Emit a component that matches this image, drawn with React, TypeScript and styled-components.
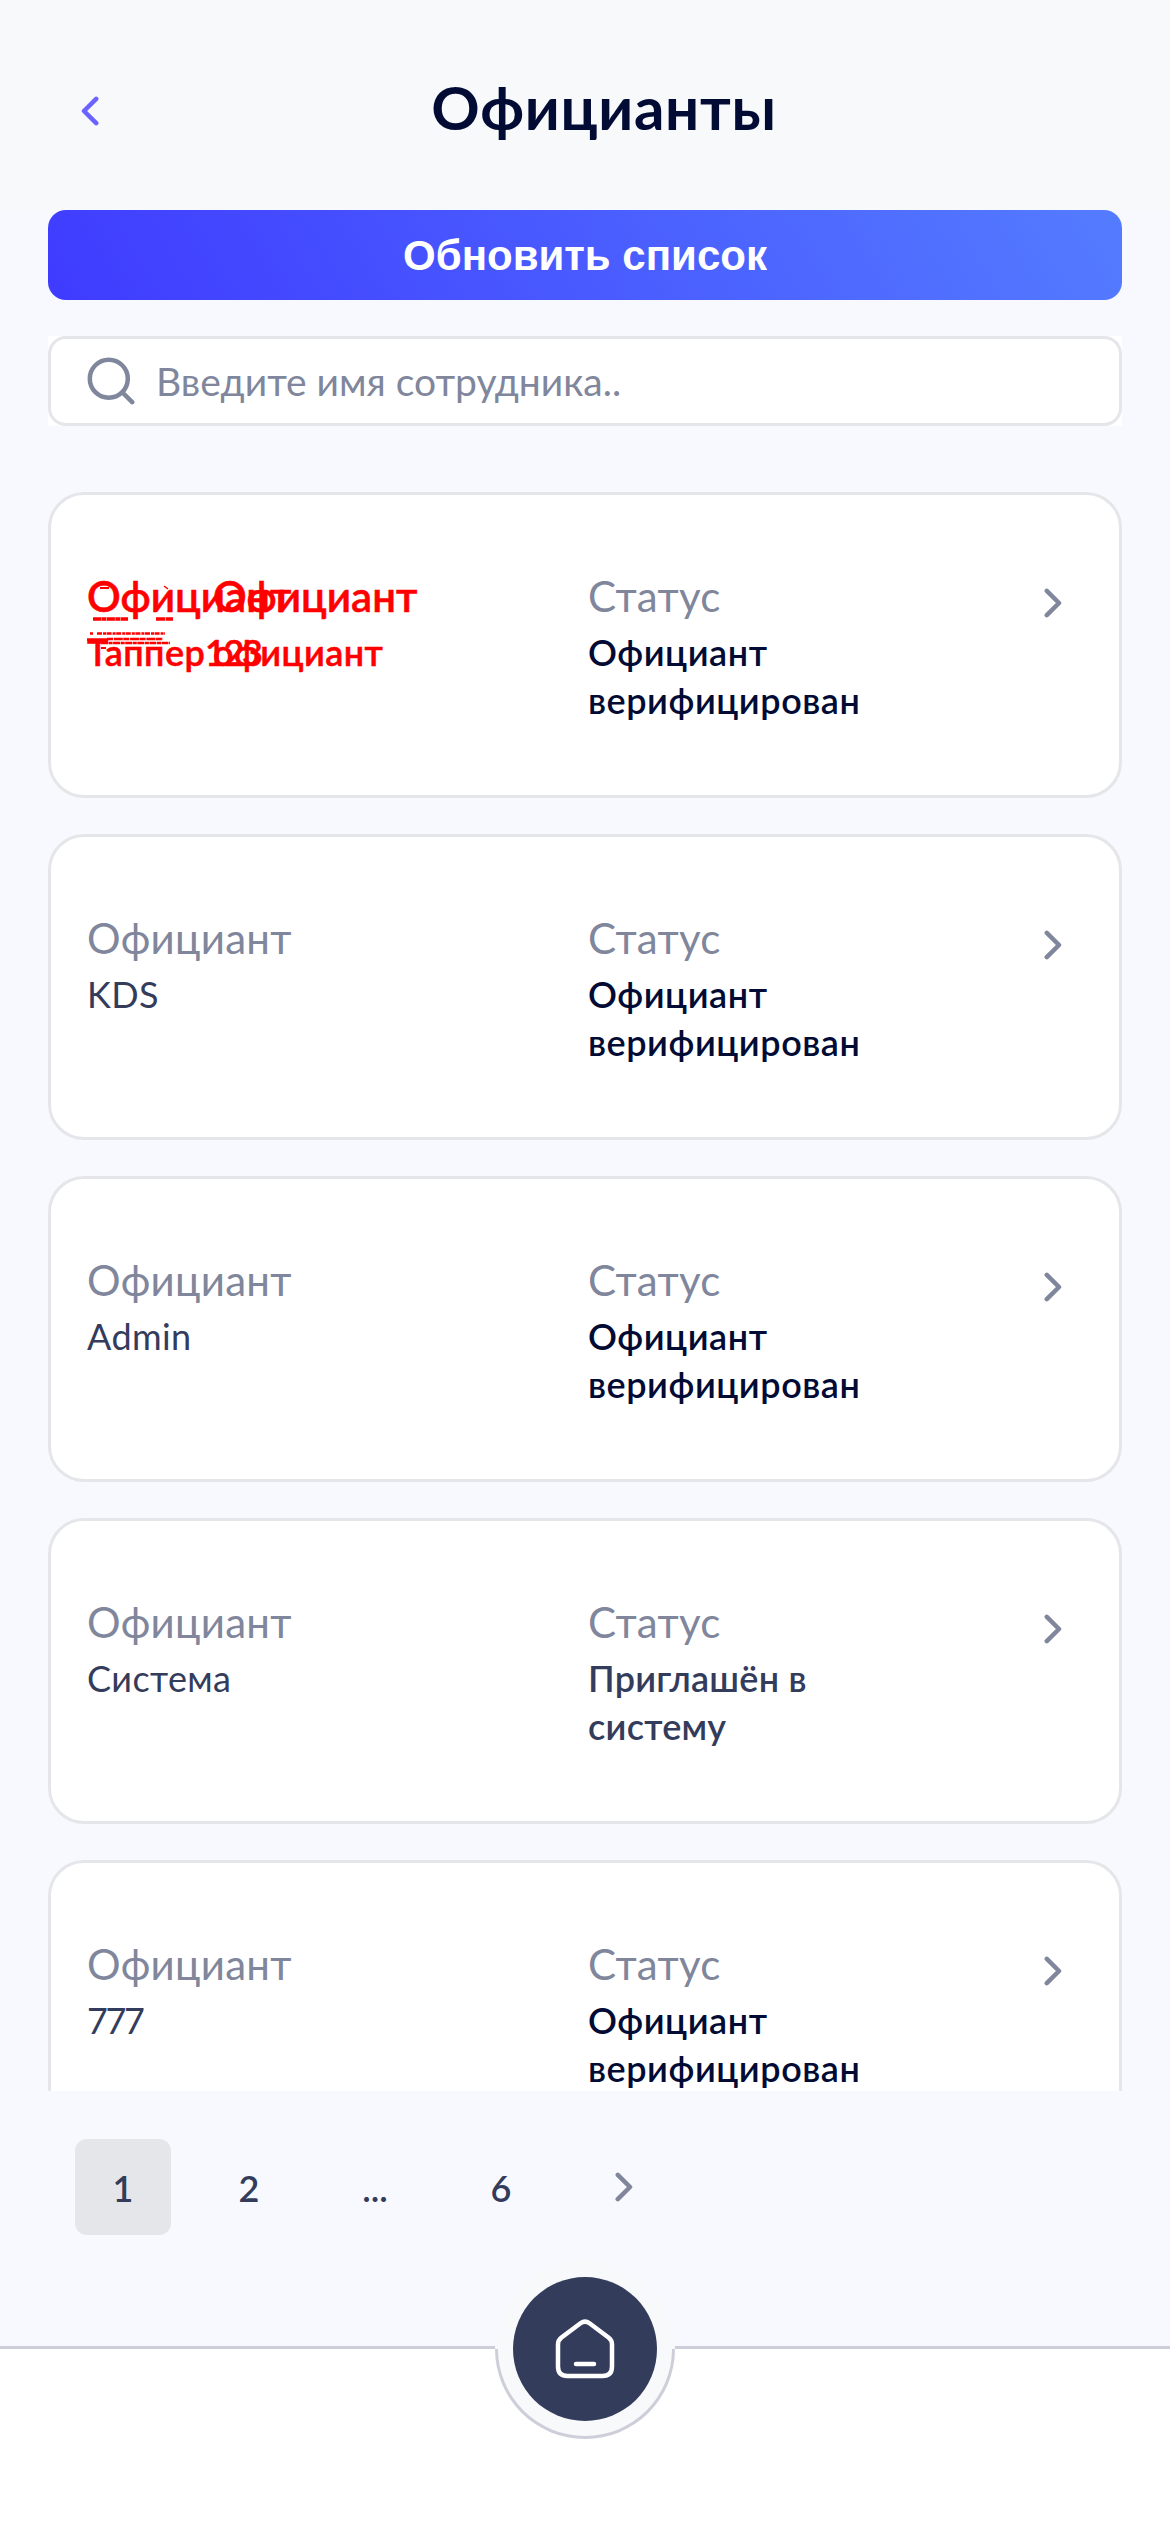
import React from "react";
import styled, { createGlobalStyle } from "styled-components";

const Global = createGlobalStyle`
  *, *::before, *::after { box-sizing: border-box; }
  body { margin: 0; background: #f8f9fe; font-family: Lato, "Noto Sans", sans-serif; }
`;

const Screen = styled.div`
  width: 1170px;
  height: 2532px;
  display: flex;
  flex-direction: column;
  overflow: hidden;
  background: #f8f9fe;
`;

const Header = styled.header`
  height: 210px;
  flex: none;
  display: grid;
  grid-template-columns: 180px 1fr 144px;
  align-items: center;
  padding-top: 3px;
  background: #f7f9fb;
`;

const BackButton = styled.button`
  border: 0;
  background: none;
  padding: 9px 0 0 81px;
  height: 42px;
  display: flex;
  align-items: center;
`;

const Title = styled.h1`
  margin: 0;
  padding-left: 2px;
  text-align: center;
  font: 700 60px/72px Lato, "Noto Sans", sans-serif;
  letter-spacing: 0.7px;
  color: #020b34;
`;

const Main = styled.main`
  height: 1881px;
  flex: none;
  padding: 0 48px;
  display: flex;
  flex-direction: column;
`;

const RefreshButton = styled.button`
  flex: none;
  height: 90px;
  border: 0;
  border-radius: 18px;
  padding: 2px 0 0;
  background: linear-gradient(60deg, #3f3bff 0%, #547cff 100%);
  color: #fff;
  font: bold 42px/48px "Liberation Sans", Arial, sans-serif;
`;

const Search = styled.div`
  flex: none;
  margin-top: 36px;
  height: 90px;
  background: #fff;
`;

const SearchBox = styled.label`
  height: 90px;
  border: 3px solid #e5e6ea;
  border-radius: 18px;
  display: flex;
  align-items: center;
  gap: 21px;
  padding-left: 36px;
  font: 400 39px/48px Lato, "Noto Sans", sans-serif;
  color: #80869b;
`;

const List = styled.section`
  margin-top: 66px;
  flex: 1;
  min-height: 0;
  overflow: hidden;
  display: flex;
  flex-direction: column;
  gap: 36px;
`;

const Card = styled.article`
  flex: none;
  height: 306px;
  border: 3px solid #e5e6ea;
  border-radius: 36px;
  background: #fff;
  padding: 76px 36px 0;
  display: grid;
  grid-template-columns: 501px 1fr 72px;
`;

const Field = styled.div`
  position: relative;
`;

const Label = styled.div<{ $alert?: boolean }>`
  font: ${(p) => (p.$alert ? 600 : 400)} 42px/51px Lato, "Noto Sans", sans-serif;
  letter-spacing: ${(p) => (p.$alert ? 0 : 0.3)}px;
  color: ${(p) => (p.$alert ? "#ff0000" : "#80869b")};
  -webkit-text-stroke: ${(p) => (p.$alert ? "0.5px #ff0000" : "0")};
  white-space: nowrap;
`;

const Value = styled.div<{ $alert?: boolean }>`
  margin-top: 6px;
  font: ${(p) => (p.$alert ? 600 : 400)} 36px/48px Lato, "Noto Sans", sans-serif;
  letter-spacing: 0.4px;
  color: ${(p) => (p.$alert ? "#ff0000" : "#343c5c")};
  -webkit-text-stroke: ${(p) => (p.$alert ? "0.5px #ff0000" : "0")};
  white-space: nowrap;
`;

const Digits = styled.span`
  letter-spacing: -2.4px;
`;

const Status = styled.div<{ $pending?: boolean }>`
  margin-top: 6px;
  width: 290px;
  font: 600 36px/48px Lato, "Noto Sans", sans-serif;
  letter-spacing: ${(p) => (p.$pending ? 0.25 : 0.55)}px;
  color: ${(p) => (p.$pending ? "#343c5c" : "#020b34")};
`;

const Ghost = styled.div`
  position: absolute;
  left: 126px;
  top: 0;
`;

const Scribble = styled.svg`
  position: absolute;
  left: 0;
  top: 13px;
`;

const Open = styled.div`
  padding: 17px 0 0 33px;
`;

const Pagination = styled.nav`
  flex: none;
  margin-top: 48px;
  height: 96px;
  padding-left: 75px;
  display: flex;
  gap: 30px;
`;

const Page = styled.button<{ $active?: boolean }>`
  width: 96px;
  height: 96px;
  border: 0;
  border-radius: 12px;
  padding: 2px 0 0;
  display: flex;
  align-items: center;
  justify-content: center;
  background: ${(p) => (p.$active ? "#e5e6ea" : "transparent")};
  color: #343c5c;
  font: 600 36px/48px Lato, "Noto Sans", sans-serif;
`;

const NextPage = styled(Page)`
  padding: 0 6px 0 0;
`;

const BottomBar = styled.footer`
  margin-top: 111px;
  flex: 1;
  border-top: 3px solid #cdced9;
  background: #fff;
  display: flex;
  justify-content: center;
`;

const HomeRing = styled.div`
  flex: none;
  width: 180px;
  height: 180px;
  margin-top: -90px;
  border-radius: 50%;
  background: linear-gradient(#f7f9fb 50%, #cdced9 50%);
  display: flex;
  align-items: center;
  justify-content: center;
`;

const HomeGap = styled.div`
  width: 174px;
  height: 174px;
  border-radius: 50%;
  background: #f7f9fb;
  display: flex;
  align-items: center;
  justify-content: center;
`;

const HomeButton = styled.div`
  width: 144px;
  height: 144px;
  border-radius: 50%;
  background: #343c5c;
  display: flex;
  align-items: center;
  justify-content: center;
`;

const Chevron = () => (
  <svg width="18" height="30" viewBox="0 0 18 30" fill="none">
    <path d="M2.800 2.800L15 15L2.800 27.200" stroke="#80869b" strokeWidth="4.500" strokeLinecap="round" strokeLinejoin="round" />
  </svg>
);

/* Tiny illegible lines laid over the first card */
const FinePrint = () => (
  <Scribble width="90" height="70" viewBox="0 0 90 70" stroke="#ff0000" fill="none">
    <path d="M13 4H22" strokeWidth="2" />
    <path d="M77 2L81 5" strokeWidth="1.500" />
    <path d="M6 35H41" strokeWidth="3.500" strokeDasharray="8 .4 5 .5" />
    <path d="M69 35H86" strokeWidth="3.500" strokeDasharray="9 .6" />
    <path d="M3 49.500H6M10 49.500H78" strokeWidth="2.500" strokeDasharray="5 1 3 .6" />
    <path d="M0 55.500H20" strokeWidth="2.500" />
    <path d="M20 55H76" strokeWidth="2.500" strokeDasharray="6 .8 9 .5" />
    <path d="M14 59H83" strokeWidth="2.500" strokeDasharray="7 .6 4 .5" />
    <path d="M14 64H19" strokeWidth="2" />
  </Scribble>
);

type Waiter = { name: string; digits?: string; alert?: boolean; pending?: boolean };

const waiters: Waiter[] = [
  { name: "Таппер", digits: "123", alert: true },
  { name: "KDS" },
  { name: "Admin" },
  { name: "Система", pending: true },
  { name: "", digits: "777" },
];

export default function App() {
  return (
    <Screen>
      <Global />
      <Header>
        <BackButton>
          <svg width="18" height="30" viewBox="0 0 18 30" fill="none">
            <path d="M15.200 2.800L3 15l12.200 12.200" stroke="#6a63ff" strokeWidth="4.500" strokeLinecap="round" strokeLinejoin="round" />
          </svg>
        </BackButton>
        <Title>Официанты</Title>
      </Header>
      <Main>
        <RefreshButton>Обновить список</RefreshButton>
        <Search>
          <SearchBox>
            <svg width="48" height="48" viewBox="0 0 48 48" fill="none" stroke="#80869b" strokeWidth="4.500" strokeLinecap="round">
              <circle cx="21.800" cy="21.700" r="19" />
              <path d="M35.500 35.500L45.200 45.200" />
            </svg>
            Введите имя сотрудника..
          </SearchBox>
        </Search>
        <List>
          {waiters.map((w, i) => (
            <Card key={i}>
              <Field>
                <Label $alert={w.alert}>Официант</Label>
                <Value $alert={w.alert}>
                  {w.name}
                  {w.digits && <Digits>{w.digits}</Digits>}
                </Value>
                {w.alert && (
                  <Ghost>
                    <Label $alert>Официант</Label>
                    <Value $alert>официант</Value>
                  </Ghost>
                )}
                {w.alert && <FinePrint />}
              </Field>
              <Field>
                <Label>Статус</Label>
                <Status $pending={w.pending}>
                  {w.pending ? "Приглашён в систему" : "Официант верифицирован"}
                </Status>
              </Field>
              <Open>
                <Chevron />
              </Open>
            </Card>
          ))}
        </List>
      </Main>
      <Pagination>
        <Page $active>1</Page>
        <Page>2</Page>
        <Page>...</Page>
        <Page>6</Page>
        <NextPage>
          <Chevron />
        </NextPage>
      </Pagination>
      <BottomBar>
        <HomeRing>
          <HomeGap>
            <HomeButton>
              <svg width="60" height="60" viewBox="0 0 60 60" fill="none" stroke="#fff" strokeWidth="4.500" strokeLinecap="round" strokeLinejoin="round">
                <path d="M25.500 4.300Q30 1 34.500 4.300L53.500 18.500Q57 21.200 57 25.500V47.500Q57 57 47.500 57H12.500Q3 57 3 47.500V25.500Q3 21.200 6.500 18.500Z" />
                <path d="M21 45H39" />
              </svg>
            </HomeButton>
          </HomeGap>
        </HomeRing>
      </BottomBar>
    </Screen>
  );
}
